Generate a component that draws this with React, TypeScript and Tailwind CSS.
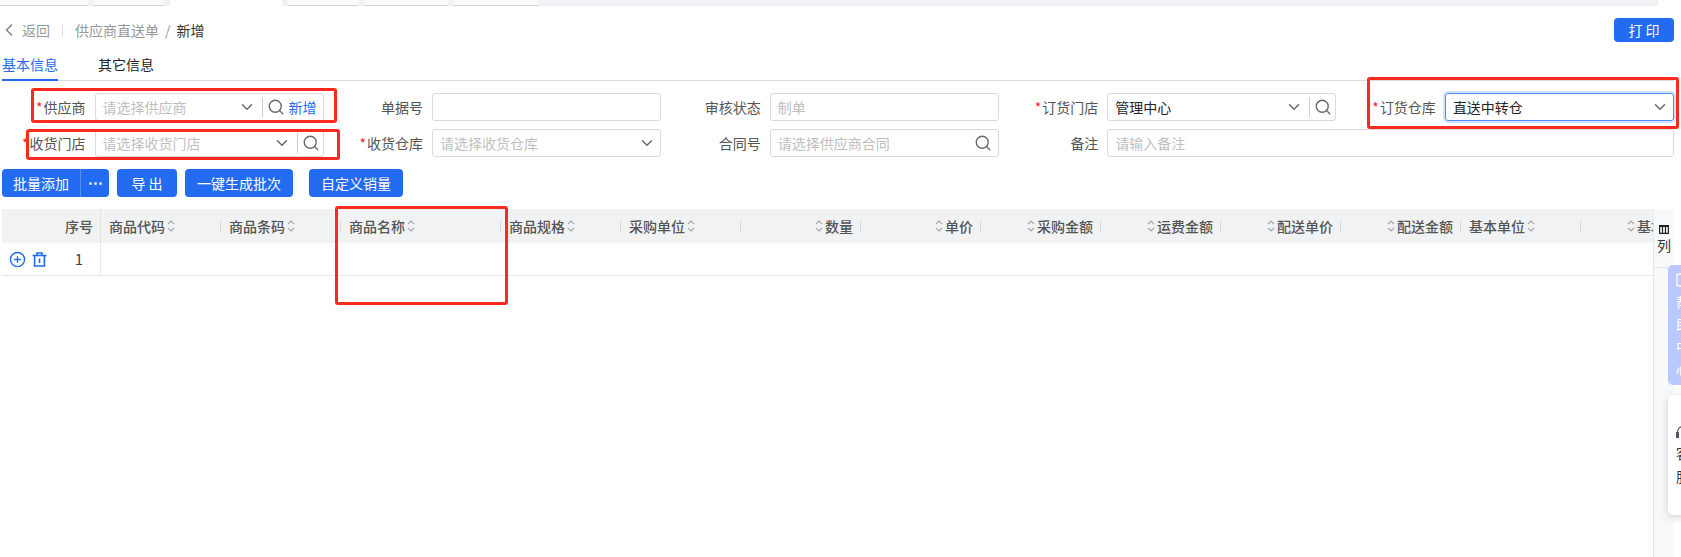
import React from 'react'
import { ChevronDown, ChevronLeft, CirclePlus, Search } from 'lucide-react'

const columns = [
  { title: '商品代码', width: 'w-[120px]' },
  { title: '商品条码', width: 'w-[120px]' },
  { title: '商品名称', width: 'w-[160px]' },
  { title: '商品规格', width: 'w-[120px]' },
  { title: '采购单位', width: 'w-[120px]' },
  { title: '数量', width: 'w-[120px]', right: true },
  { title: '单价', width: 'w-[120px]', right: true },
  { title: '采购金额', width: 'w-[120px]', right: true },
  { title: '运费金额', width: 'w-[120px]', right: true },
  { title: '配送单价', width: 'w-[120px]', right: true },
  { title: '配送金额', width: 'w-[120px]', right: true },
  { title: '基本单位', width: 'w-[120px]' },
  { title: '基本数量', width: 'w-[120px]', right: true },
]

const SortIcon = () => (
  <svg width="8" height="14" viewBox="0 0 8 14" fill="none" stroke="#aaaaaa" strokeWidth="1.2" className="mx-0.5 shrink-0">
    <path d="M1 5 L4 2 L7 5" />
    <path d="M1 9 L4 12 L7 9" />
  </svg>
)

const TrashIcon = () => (
  <svg width="15" height="15" viewBox="0 0 15 15" fill="none" stroke="#1f6bf0" strokeWidth="1.6">
    <path d="M0.5 3.5 H14.5" />
    <path d="M5 3.5 V1 H10 V3.5" />
    <path d="M2.6 3.5 V14 H12.4 V3.5" />
    <path d="M7.5 6.5 V11" />
  </svg>
)

const Label = ({ text, required }: { text: string; required?: boolean }) => (
  <label className="mr-[9px] shrink-0 whitespace-nowrap text-[#555555]">
    {required && <span className="mr-px text-[#f5222d]">*</span>}
    {text}
  </label>
)

const Field = ({ children, focus }: { children: React.ReactNode; focus?: boolean }) => (
  <div
    className={`flex h-[28px] min-w-0 flex-1 items-center rounded-[3px] border pl-[7px] ${
      focus ? 'border-[#4d8bf5] shadow-[0_0_0_2px_#d3e2fc]' : 'border-[#d9d9d9]'
    }`}
  >
    {children}
  </div>
)

const Placeholder = ({ text }: { text: string }) => (
  <span className="flex-1 truncate text-[#bfbfbf]">{text}</span>
)

const Value = ({ text }: { text: string }) => <span className="flex-1 truncate text-[#262626]">{text}</span>

const Caret = ({ end }: { end?: boolean }) => (
  <ChevronDown size={18} strokeWidth={1.9} className={`shrink-0 text-[#666666] ${end ? 'mr-[4px]' : 'mr-[6px]'}`} />
)

const Lookup = () => (
  <span className="flex h-[20px] items-center border-l border-[#cccccc] pl-[4px] pr-[3px]">
    <Search size={18} strokeWidth={1.8} className="text-[#666666]" />
  </span>
)

const Cell = ({ children }: { children: React.ReactNode }) => (
  <div className="flex items-center justify-end">{children}</div>
)

const FieldBox = ({ children }: { children: React.ReactNode }) => (
  <div className="flex w-[229px]">{children}</div>
)

const Button = ({ text, className }: { text: string; className: string }) => (
  <button className={`h-[28px] rounded-[4px] bg-[#236bf0] text-white ${className}`}>{text}</button>
)

const Annotation = ({ className }: { className: string }) => (
  <div className={`pointer-events-none absolute rounded-[3px] border-[3px] border-[#fb2a1e] ${className}`} />
)

export default function App() {
  return (
    <div
      className="relative h-[557px] w-[1681px] overflow-hidden bg-white text-[14px] leading-[20px]"
      style={{ fontFamily: '"Noto Sans CJK SC", "Noto Sans", sans-serif' }}
    >
      {/* page tabs, only the bottom edge is visible */}
      <div className="flex h-[6px] w-[1658px] gap-[6px] bg-[#f0f2f5]">
        <div className="w-[88px] border-b border-[#d4d4d4] bg-[#fafafa]" />
        <div className="w-[70px] border-b border-[#d4d4d4] bg-[#fafafa]" />
        <div className="w-[112px] bg-white" />
        <div className="w-[70px] border-b border-[#d4d4d4] bg-[#fafafa]" />
        <div className="w-[84px] border-b border-[#d4d4d4] bg-[#fafafa]" />
        <div className="w-[84px] border-b border-[#d4d4d4] bg-[#fafafa]" />
      </div>

      {/* breadcrumb */}
      <div className="mt-[12px] flex h-[24px] items-center pr-[7px]">
        <ChevronLeft size={20} strokeWidth={2} className="-ml-px text-[#888888]" />
        <span className="ml-[3px] text-[#999999]">返回</span>
        <span className="mx-3 h-[12px] w-px bg-[#dddddd]" />
        <span className="text-[#999999]">供应商直送单</span>
        <span className="mx-[6px] text-[#999999]">/</span>
        <span className="text-[#333333]">新增</span>
        <button className="ml-auto h-[24px] w-[60px] rounded-[4px] bg-[#236bf0] text-white">打 印</button>
      </div>

      {/* section tabs */}
      <div className="mx-[2px] mr-[7px] mt-[12px] flex h-[27px] gap-10 border-b border-[#dddddd]">
        <div className="h-[27px] border-b-2 border-[#236bf0] text-[#236bf0]">基本信息</div>
        <div className="text-[#262626]">其它信息</div>
      </div>

      {/* form */}
      <div className="mt-[12px] grid w-[1674px] grid-cols-[323.5px_repeat(4,337.6px)] gap-y-[8px]">
        <Cell>
          <Label text="供应商" required />
          <FieldBox>
            <Field>
              <Placeholder text="请选择供应商" />
              <Caret />
              <span className="flex h-[20px] items-center border-l border-[#cccccc] pl-[4px]">
                <Search size={18} strokeWidth={1.8} className="text-[#666666]" />
                <span className="ml-[4px] mr-[6px] whitespace-nowrap text-[#236bf0]">新增</span>
              </span>
            </Field>
          </FieldBox>
        </Cell>
        <Cell>
          <Label text="单据号" />
          <FieldBox>
            <Field>
              <span />
            </Field>
          </FieldBox>
        </Cell>
        <Cell>
          <Label text="审核状态" />
          <FieldBox>
            <Field>
              <Placeholder text="制单" />
            </Field>
          </FieldBox>
        </Cell>
        <Cell>
          <Label text="订货门店" required />
          <FieldBox>
            <Field>
              <Value text="管理中心" />
              <Caret />
              <Lookup />
            </Field>
          </FieldBox>
        </Cell>
        <Cell>
          <Label text="订货仓库" required />
          <FieldBox>
            <Field focus>
              <Value text="直送中转仓" />
              <Caret end />
            </Field>
          </FieldBox>
        </Cell>

        <Cell>
          <Label text="收货门店" required />
          <FieldBox>
            <Field>
              <Placeholder text="请选择收货门店" />
              <Caret />
              <Lookup />
            </Field>
          </FieldBox>
        </Cell>
        <Cell>
          <Label text="收货仓库" required />
          <FieldBox>
            <Field>
              <Placeholder text="请选择收货仓库" />
              <Caret end />
            </Field>
          </FieldBox>
        </Cell>
        <Cell>
          <Label text="合同号" />
          <FieldBox>
            <Field>
              <Placeholder text="请选择供应商合同" />
              <Search size={18} strokeWidth={1.8} className="mr-[6px] shrink-0 text-[#666666]" />
            </Field>
          </FieldBox>
        </Cell>
        <div className="col-span-2 flex items-center justify-end">
          <Label text="备注" />
          <div className="flex w-[566.5px]">
            <Field>
              <Placeholder text="请输入备注" />
            </Field>
          </div>
        </div>
      </div>

      {/* actions */}
      <div className="ml-[2px] mt-[12px] flex">
        <div className="flex h-[28px] w-[107px] rounded-[4px] bg-[#236bf0] text-white">
          <span className="flex w-[79px] items-center justify-center border-r border-[#5a8ff4]">批量添加</span>
          <span className="flex flex-1 items-center justify-center gap-[2px]">
            <i className="h-[3px] w-[3px] rounded-full bg-white/80" />
            <i className="h-[3px] w-[3px] rounded-full bg-white/80" />
            <i className="h-[3px] w-[3px] rounded-full bg-white/80" />
          </span>
        </div>
        <Button text="导 出" className="ml-2 w-[60px]" />
        <Button text="一键生成批次" className="ml-2 w-[108px]" />
        <Button text="自定义销量" className="ml-4 w-[94px]" />
      </div>

      {/* table + column panel */}
      <div className="mt-[12px] flex h-[348px]">
        <div className="ml-[2px] w-[1651px] overflow-hidden">
          <div className="flex h-[34px] w-max items-center bg-[#f1f2f4] font-medium text-[#555555]">
            <div className="flex h-full w-[99px] items-center justify-end border-r border-[#e4e4e4] pr-[7px]">序号</div>
            {columns.map((col, i) => (
              <div key={col.title} className={`relative flex items-center px-2 ${col.width} ${col.right ? 'justify-end' : ''}`}>
                {col.right && <SortIcon />}
                <span className="whitespace-nowrap">{col.title}</span>
                {!col.right && <SortIcon />}
                <span className={`absolute right-0 h-[13px] w-px bg-[#d8d8d8] ${i === 12 ? 'hidden' : ''}`} />
              </div>
            ))}
          </div>
          <div className="flex h-[33px] items-center border-b border-[#e8e8e8]">
            <div className="flex h-full w-[99px] items-center border-r border-[#e8e8e8] pl-[7px] pr-[17px]">
              <CirclePlus size={17} strokeWidth={2} className="text-[#236bf0]" />
              <span className="ml-[6px] flex">
                <TrashIcon />
              </span>
              <span className="ml-auto text-[15px] text-[#444444]">1</span>
            </div>
          </div>
        </div>

        <div className="w-[21px] border-l border-[#e6e6e6] bg-[#f8f9fb]">
          <div className="flex h-[59px] flex-col items-center border-b border-[#e6e6e6] pt-[16px] leading-[16px] text-[#333333]">
            <svg width="10" height="9" viewBox="0 0 10 9" fill="none" stroke="#222222" strokeWidth="1.2">
              <path d="M0.6 1 H9.4 V8.4 H0.6 Z M3.5 1 V8.4 M6.5 1 V8.4" />
              <path d="M0 1 H10" strokeWidth="2" />
            </svg>
            <span className="mt-[3px]">列</span>
          </div>
        </div>
      </div>

      {/* floating help + service widgets, clipped by the window edge */}
      <div className="absolute left-[1668px] top-[265px] flex h-[120px] w-[40px] flex-col items-start gap-[2px] rounded-l-[5px] bg-[#b9c9ff] pl-[8px] pt-[8px] text-white">
        <svg width="14" height="14" viewBox="0 0 14 14" fill="none" stroke="#ffffff" strokeWidth="1.3" className="mb-[3px]">
          <rect x="1" y="1" width="12" height="12" rx="1" />
        </svg>
        <span>帮</span>
        <span>助</span>
        <span>中</span>
        <span>心</span>
      </div>
      <div className="absolute left-[1668px] top-[395px] flex h-[120px] w-[40px] flex-col items-start rounded-l-[5px] bg-white pl-[8px] pt-[30px] text-[#333333] shadow-[0_2px_8px_rgba(0,0,0,0.18)]">
        <svg width="14" height="14" viewBox="0 0 14 14" fill="#555566" className="mb-[3px]">
          <path d="M0 7 H3 V13 H0 Z" />
          <path d="M1.5 7 A5.5 5.5 0 0 1 12.5 7" fill="none" stroke="#555566" strokeWidth="1.2" />
        </svg>
        <span className="leading-[23px]">客</span>
        <span className="leading-[23px]">服</span>
      </div>

      {/* red review marks drawn on top of the screenshot */}
      <Annotation className="left-[31px] top-[88px] h-[35px] w-[306px]" />
      <Annotation className="left-[26px] top-[129px] h-[31px] w-[314px]" />
      <Annotation className="left-[335px] top-[206px] h-[99px] w-[173px]" />
      <Annotation className="left-[1367px] top-[77px] h-[52px] w-[312px]" />
    </div>
  )
}
